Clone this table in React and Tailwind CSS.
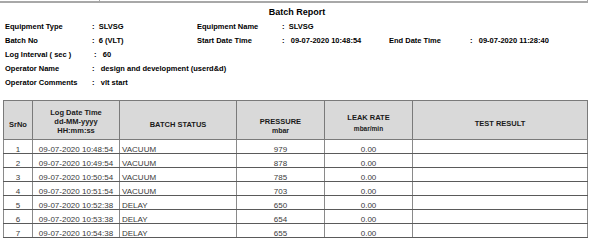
import React from "react";

const rows = [
  ["1", "09-07-2020 10:48:54", "VACUUM", "979", "0.00"],
  ["2", "09-07-2020 10:49:54", "VACUUM", "878", "0.00"],
  ["3", "09-07-2020 10:50:54", "VACUUM", "785", "0.00"],
  ["4", "09-07-2020 10:51:54", "VACUUM", "703", "0.00"],
  ["5", "09-07-2020 10:52:38", "DELAY", "650", "0.00"],
  ["6", "09-07-2020 10:53:38", "DELAY", "654", "0.00"],
  ["7", "09-07-2020 10:54:38", "DELAY", "655", "0.00"],
];

const cell = "border-x border-b border-x-[#8a8a8a] border-b-[#5a5a5a] align-bottom leading-[7px]";

export default function App() {
  return (
    <div
      className="w-[594px] h-[247px] bg-white overflow-hidden text-black"
      style={{ fontFamily: '"Liberation Sans", Arial, sans-serif' }}
    >
      {/* top strip from previous section */}
      <div className="flex w-[588px] h-[3px] border-b-2 border-[#a8a8a8]">
        <div className="w-[100px] border-r border-[#a8a8a8]" />
        <div className="flex-1 border-r border-[#a8a8a8]" />
      </div>

      <div className="mt-[3px] h-[12px] leading-[12px] text-center text-[9px] font-bold">
        Batch Report
      </div>

      <div className="mt-[2px] pl-[5px] text-[7.5px] font-bold">
        <div className="flex h-[14px] items-center">
          <span className="w-[87px]">Equipment Type</span>
          <span className="w-[105px] whitespace-pre">:  SLVSG</span>
          <span className="w-[85px]">Equipment Name</span>
          <span className="whitespace-pre">:  SLVSG</span>
        </div>
        <div className="flex h-[14px] items-center">
          <span className="w-[87px]">Batch No</span>
          <span className="w-[105px] whitespace-pre">:  6 (VLT)</span>
          <span className="w-[85px]">Start Date Time</span>
          <span className="w-[107px] whitespace-pre">:   09-07-2020 10:48:54</span>
          <span className="w-[81px]">End Date Time</span>
          <span className="whitespace-pre">:   09-07-2020 11:28:40</span>
        </div>
        <div className="flex h-[14px] items-center">
          <span className="w-[89px]">Log Interval ( sec )</span>
          <span className="whitespace-pre">:   60</span>
        </div>
        <div className="flex h-[14px] items-center">
          <span className="w-[87px]">Operator Name</span>
          <span className="whitespace-pre">:   design and development (userd&amp;d)</span>
        </div>
        <div className="flex h-[14px] items-center">
          <span className="w-[87px]">Operator Comments</span>
          <span className="whitespace-pre">:   vlt start</span>
        </div>
      </div>

      <table className="mt-[10px] ml-[3px] border-collapse table-fixed w-[584px] border border-[#8a8a8a]">
        <colgroup>
          <col className="w-[29px]" />
          <col className="w-[87px]" />
          <col className="w-[117px]" />
          <col className="w-[88px]" />
          <col className="w-[88px]" />
          <col className="w-[175px]" />
        </colgroup>
        <thead>
          <tr className="bg-[#d9d9d9] h-[39px] text-[7.5px] font-bold text-[#1a1a1a]">
            <th className="border border-[#7a7a7a] align-middle pt-[9px] font-bold">SrNo</th>
            <th className="border border-[#7a7a7a] align-middle pt-[2px] leading-[9px] font-bold">
              Log Date Time
              <br />
              dd-MM-yyyy
              <br />
              HH:mm:ss
            </th>
            <th className="border border-[#7a7a7a] align-middle pt-[9px] font-bold">BATCH STATUS</th>
            <th className="border border-[#7a7a7a] align-middle pt-[11px] leading-[9px] font-bold">
              PRESSURE
              <br />
              <span className="text-[7px]">mbar</span>
            </th>
            <th className="border border-[#7a7a7a] align-middle pt-[5px] leading-[11px] font-bold">
              LEAK RATE
              <br />
              <span className="text-[6.5px]">mbar/min</span>
            </th>
            <th className="border border-[#7a7a7a] align-middle pt-[8px] font-bold">TEST RESULT</th>
          </tr>
        </thead>
        <tbody className="text-[8px] text-[#3a3a3a]">
          {rows.map((r) => (
            <tr key={r[0]} className="h-[14px]">
              <td className={`${cell} text-center`}>{r[0]}</td>
              <td className={`${cell} text-center`}>{r[1]}</td>
              <td className={`${cell} pl-[2px]`}>{r[2]}</td>
              <td className={`${cell} text-center`}>{r[3]}</td>
              <td className={`${cell} text-center`}>{r[4]}</td>
              <td className={cell} />
            </tr>
          ))}
        </tbody>
      </table>
    </div>
  );
}
